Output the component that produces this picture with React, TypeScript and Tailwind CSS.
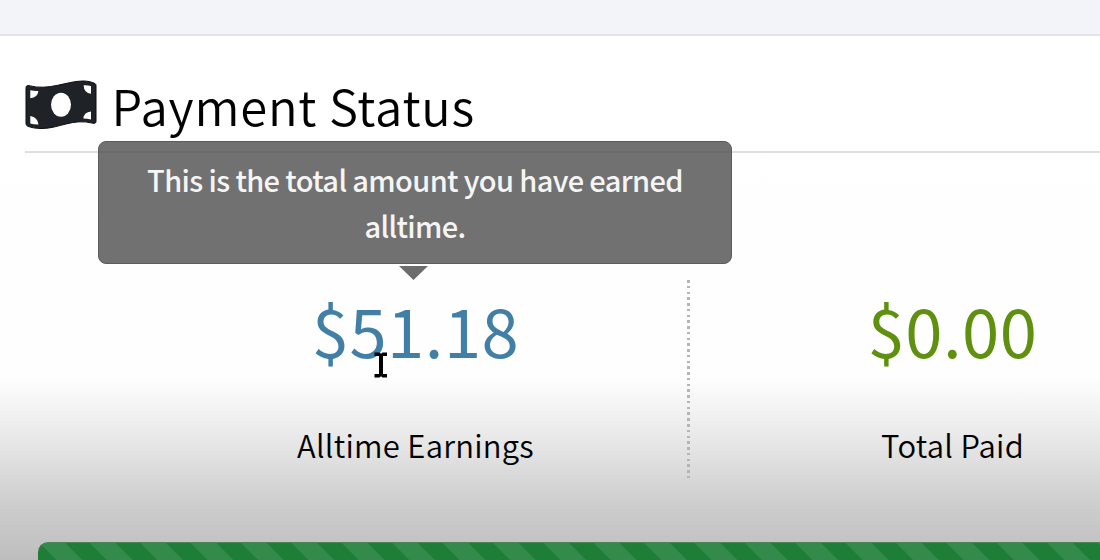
import React from "react";

interface Stat {
  label: string;
  amount: string;
  columnClass: string;
  amountClass: string;
}

const stats: Stat[] = [
  {
    label: "Alltime Earnings",
    amount: "$51.18",
    columnClass: "w-[547px]",
    amountClass: "text-[#417fa6]",
  },
  {
    label: "Total Paid",
    amount: "$0.00",
    columnClass: "w-[527px]",
    amountClass: "text-[#5f900f]",
  },
];

function MoneyIcon() {
  return (
    <svg className="mt-11 h-[52px] w-[72px] shrink-0" viewBox="0 0 72 52">
      <path
        d="M4 5.7C24 11 42 1 58 1C63 1 67 2 70 3.6Q71 4.2 71 5.5V41C71 43 70 43.8 68 43.2C48 38 34 48.5 17 48.5C11 48.5 6 47.7 2.5 46.1Q1 45.3 1 43.5V8C1 6 2 5.1 4 5.7Z"
        fill="#1f2327"
        stroke="#0b0c10"
        strokeWidth="1"
      />
      <ellipse cx="36" cy="24.7" rx="10" ry="12" fill="#fff" />
      <path
        d="M5.3 10.2Q9.5 11.2 13.4 10.9Q12.8 17.3 5.3 18.2ZM58.6 5.2Q62.5 5 66 6V13.8Q59 13 58.6 5.2ZM66 31.5V39.4Q62 38.5 58.3 38.5Q59 32.2 66 31.5ZM5.3 36Q12.6 37 13.5 44.5Q9 44.6 5.3 43.6Z"
        fill="#fff"
      />
    </svg>
  );
}

function Tooltip({ children }: { children: React.ReactNode }) {
  return (
    <div className="absolute left-[98px] top-[141px] w-[634px]">
      <div className="h-[123px] rounded-lg border border-[#5c5c5c] bg-[#4e4e4e]/80 px-10 pt-[14px] text-center text-[29px] leading-[46px] font-medium tracking-[-0.63px] text-[#f5f5f5]">
        {children}
      </div>
      <svg className="mt-0.5 ml-[301px] block h-[14px] w-[29px]" viewBox="0 0 29 14">
        <path d="M0 0H29L14.5 14Z" fill="#6c6c6c" />
      </svg>
    </div>
  );
}

function TextCursor() {
  return (
    <svg className="absolute left-[374px] top-[352px] h-[26px] w-[14px]" viewBox="0 0 14 26">
      <path
        d="M0.5 0.5H5.5L7 1.7L8.5 0.5H13V4H9V22H13V25.5H8.5L7 24.3L5.5 25.5H0.5V22H5V4H0.5Z"
        fill="#000"
      />
    </svg>
  );
}

export default function App() {
  return (
    <div className="relative flex h-[560px] w-[1100px] flex-col overflow-hidden bg-white font-['Noto_Sans_CJK_JP','Noto_Sans_CJK_SC',sans-serif] text-black">
      <div className="h-[36px] shrink-0 border-b-2 border-[#e3e4e7] bg-[#f2f4f9]" />

      <div className="flex flex-1 flex-col bg-[linear-gradient(to_bottom,#ffffff_0px,#fefefe_341px,#f2f2f2_376px,#e5e5e5_411px,#d7d7d7_444px,#cbcbcb_476px,#c3c3c3_507px,#bdbdbd_524px)]">
        {/* Header */}
        <div className="ml-[25px] flex h-[117px] shrink-0 items-start border-b-2 border-[#dedfe0]">
          <MoneyIcon />
          <h2 className="ml-[14.5px] mt-[33px] text-[49px] leading-[72px] [font-weight:350] tracking-[0.75px] whitespace-nowrap">
            Payment Status
          </h2>
        </div>

        {/* Totals */}
        <div className="mt-[127px] ml-[142px] flex h-[198px] w-[1074px] shrink-0">
          {stats.map((stat, i) => (
            <div
              key={stat.label}
              className={`relative flex shrink-0 flex-col items-center ${stat.columnClass}`}
            >
              <div className={`text-[67px] leading-[98px] tracking-[0.5px] ${stat.amountClass}`}>
                {stat.amount}
              </div>
              <div className="mt-[44px] text-[31px] leading-[46px] [font-weight:350] tracking-[0.25px]">
                {stat.label}
              </div>
              {i === 0 && (
                <div className="absolute inset-y-0 -right-px w-[3px] bg-[repeating-linear-gradient(to_bottom,#b5b5b5_0px,#b5b5b5_2.5px,transparent_2.5px,transparent_5.76px)]" />
              )}
            </div>
          ))}
        </div>

        {/* Progress */}
        <div className="mt-16 ml-[38px] h-[50px] shrink-0 rounded-tl-[10px] border-t border-[#4a8557] bg-[#1e7d37] bg-[linear-gradient(45deg,#348a4a_25%,transparent_25%,transparent_50%,#348a4a_50%,#348a4a_75%,transparent_75%)] bg-[length:50.4px_50.4px] bg-[position:2px_0px]" />
      </div>

      <Tooltip>This is the total amount you have earned alltime.</Tooltip>
      <TextCursor />
    </div>
  );
}
